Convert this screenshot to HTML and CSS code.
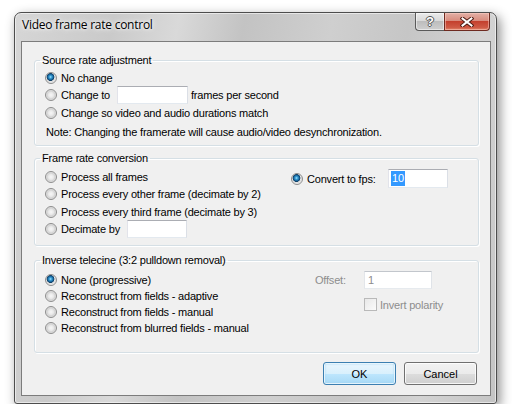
FILE: index.html
```html
<!DOCTYPE html>
<html lang="en">
<head>
    <meta charset="UTF-8">
    <title>Video frame rate control</title>
    <link rel="stylesheet" href="styles.css">
</head>
<body>
<div class="window">
    <div class="titlebar">
        <span class="title">Video frame rate control</span>
        <div class="caption-buttons">
            <button class="cap help">?</button>
            <button class="cap close">
                <svg width="14" height="10" viewBox="0 0 14 10">
                    <path d="M2.5 1.5 L11.5 8.5 M11.5 1.5 L2.5 8.5" stroke="#4b1a12" stroke-width="4" stroke-linecap="square" fill="none"/>
                    <path d="M2.5 1.5 L11.5 8.5 M11.5 1.5 L2.5 8.5" stroke="#fff" stroke-width="2" stroke-linecap="square" fill="none"/>
                </svg>
            </button>
        </div>
    </div>

    <div class="client">
        <fieldset class="group group-source">
            <legend>Source rate adjustment</legend>
            <label class="row"><input type="radio" class="radio" name="src" checked>No change</label>
            <div class="row">
                <label class="opt w-change"><input type="radio" class="radio" name="src">Change to</label>
                <span class="field w-rate"></span>
                <span class="after">frames per second</span>
            </div>
            <label class="row"><input type="radio" class="radio" name="src">Change so video and audio durations match</label>
            <p class="note">Note: Changing the framerate will cause audio/video desynchronization.</p>
        </fieldset>

        <fieldset class="group group-convert">
            <legend>Frame rate conversion</legend>
            <div class="cols">
                <div class="col-left w-left2">
                    <label class="row"><input type="radio" class="radio" name="conv">Process all frames</label>
                    <label class="row"><input type="radio" class="radio" name="conv">Process every other frame (decimate by 2)</label>
                    <label class="row"><input type="radio" class="radio" name="conv">Process every third frame (decimate by 3)</label>
                    <div class="row">
                        <label class="opt w-decimate"><input type="radio" class="radio" name="conv">Decimate by</label>
                        <span class="field w-dec"></span>
                    </div>
                </div>
                <div class="col-right fps">
                    <label class="opt w-fps"><input type="radio" class="radio" name="conv" checked>Convert to fps:</label>
                    <span class="field w-fpsfield"><span class="sel">10</span></span>
                </div>
            </div>
        </fieldset>

        <fieldset class="group group-ivtc">
            <legend>Inverse telecine (3:2 pulldown removal)</legend>
            <div class="cols">
                <div class="col-left w-left3">
                    <label class="row short"><input type="radio" class="radio" name="ivtc" checked>None (progressive)</label>
                    <label class="row short"><input type="radio" class="radio" name="ivtc">Reconstruct from fields - adaptive</label>
                    <label class="row short"><input type="radio" class="radio" name="ivtc">Reconstruct from fields - manual</label>
                    <label class="row short"><input type="radio" class="radio" name="ivtc">Reconstruct from blurred fields - manual</label>
                </div>
                <div class="col-right offset">
                    <div class="offset-row">
                        <span class="disabled w-offset">Offset:</span>
                        <span class="field disabled-field w-off">1</span>
                    </div>
                    <label class="check-row disabled"><span class="checkbox"></span>Invert polarity</label>
                </div>
            </div>
        </fieldset>

        <div class="buttons">
            <button class="btn default">OK</button>
            <button class="btn">Cancel</button>
        </div>
    </div>
</div>
</body>
</html>
```

FILE: styles.css
```css
body {
    margin: 0;
    background: #fff;
    font-family: "Liberation Sans", Arial, sans-serif;
    font-size: 11px;
    letter-spacing: -0.2px;
    color: #000;
}
.window {
    box-sizing: border-box;
    width: 483px;
    height: 392px;
    margin: 12px 0 0 14px;
    padding: 0 5px 7px 6px;
    border: 1px solid #4d4d4d;
    border-radius: 7px 7px 3px 3px;
    background: linear-gradient(100deg, #d6d6d6 0%, #cacaca 18%, #d9d9d9 30%, #c3c3c3 42%, #cfcfcf 58%, #c6c6c6 72%, #d3d3d3 86%, #c4c4c4 100%);
    box-shadow: inset 0 0 0 1px rgba(255, 255, 255, 0.55), 3px 4px 12px rgba(0, 0, 0, 0.45);
    display: flex;
    flex-direction: column;
}
.titlebar {
    height: 28px;
    display: flex;
    justify-content: space-between;
    align-items: flex-start;
    padding: 0 1px;
}
.title {
    font-family: "Open Sans", "Noto Sans", sans-serif;
    font-size: 12px;
    line-height: 16px;
    margin-top: 4px;
    letter-spacing: -0.25px;
    text-shadow: 0 0 6px #fff, 0 0 3px #fff;
}
.caption-buttons {
    display: flex;
}
.cap {
    height: 18px;
    margin: 0;
    padding: 0;
    border: 1px solid #5a5a5a;
    border-top: none;
    display: flex;
    align-items: center;
    justify-content: center;
}
.help {
    width: 29px;
    border-right: none;
    border-radius: 0 0 0 4px;
    background: linear-gradient(#ebebeb, #d9d9d9 45%, #bdbdbd 50%, #cfcfcf);
    color: #fff;
    font: bold 13px "Liberation Sans", Arial, sans-serif;
    text-shadow: -1px 0 #555, 1px 0 #555, 0 -1px #555, 0 1px #555;
    box-shadow: inset 0 0 0 1px rgba(255, 255, 255, 0.5);
}
.close {
    width: 46px;
    border-radius: 0 0 4px 0;
    border-color: #6e2a20;
    background: linear-gradient(#e3b0a6, #d88c7e 45%, #c4402e 50%, #cf5a45 85%, #e18a6e);
    box-shadow: inset 0 0 0 1px rgba(255, 210, 200, 0.5);
}
.client {
    flex: 1;
    background: #f0f0f0;
    border: 1px solid #7c7c7c;
    padding: 12px 0 10px;
    display: flex;
    flex-direction: column;
}
.group {
    margin: 0 11px 0 12px;
    padding: 3px 0 4px 10px;
    border: 1px solid #d5dfe5;
    border-radius: 3px;
    box-shadow: inset 1px 1px 0 #fff, 1px 1px 0 #fff;
    min-inline-size: 0;
}
.group legend {
    padding: 0 2px;
    margin-left: -5px;
    line-height: 13px;
}
.group-source {
    padding-top: 2px;
    padding-bottom: 3.5px;
}
.group-convert {
    margin-top: 6.5px;
    padding-top: 3px;
    padding-bottom: 7px;
}
.group-ivtc {
    margin-top: 8px;
    padding-top: 5px;
    padding-bottom: 16px;
}
.row {
    display: flex;
    align-items: center;
    height: 17.5px;
    white-space: nowrap;
}
.row.short {
    height: 16px;
}
.opt {
    display: flex;
    align-items: center;
}
.w-change { width: 72px; }
.w-decimate { width: 82px; }
.w-fps { width: 97px; }
.w-left2 { width: 246px; }
.w-left3 { width: 270px; }
.w-offset { width: 49px; }
.radio {
    appearance: none;
    -webkit-appearance: none;
    box-sizing: border-box;
    width: 12px;
    height: 12px;
    margin: 0 4px 0 0;
    border: 1px solid #8d8d8d;
    border-radius: 50%;
    background: radial-gradient(circle at 50% 50%, #f7f7f7 0, #e9e9e9 2.5px, #d2d2d2 4px, #e4e4e4 5px, #f3f3f3 6px);
    flex: none;
}
.radio:checked {
    background: radial-gradient(circle at 45% 40%, #aee6ff 0, #3fa6dc 1.2px, #1a6aa2 2.6px, #0b3b61 3.6px, #eaeaea 4.2px, #dadada 5px, #f0f0f0 6px);
}
.field {
    box-sizing: border-box;
    display: inline-flex;
    align-items: center;
    height: 18px;
    padding: 0 3px;
    background: #fff;
    border: 1px solid;
    border-color: #abadb3 #dbdfe6 #e3e9ef #e2e3ea;
    flex: none;
}
.w-rate { width: 71px; }
.w-dec { width: 60px; }
.w-fpsfield {
    width: 60px;
    height: 19px;
    padding-left: 2px;
}
.w-off { width: 68px; }
.sel {
    background: #3399ff;
    color: #fff;
    line-height: 15px;
    padding: 0 1px;
}
.after {
    margin-left: 3px;
}
.note {
    margin: 2px 0 0 1px;
    line-height: 17.5px;
    white-space: nowrap;
}
.cols {
    display: flex;
    align-items: flex-start;
}
.fps {
    display: flex;
    align-items: center;
    margin-top: 1px;
}
.offset {
    margin-top: -1px;
}
.offset-row {
    display: flex;
    align-items: center;
}
.disabled {
    color: #8d8d8d;
}
.disabled-field {
    color: #8d8d8d;
    border-color: #c2c6cc #dfe3e8 #e6eaee #e3e6ea;
}
.check-row {
    display: flex;
    align-items: center;
    margin: 9px 0 0 49px;
    height: 13px;
}
.checkbox {
    box-sizing: border-box;
    width: 13px;
    height: 13px;
    margin-right: 3px;
    border: 1px solid #b9b9b9;
    background: linear-gradient(135deg, #e8e8e8, #fbfbfb);
}
.buttons {
    display: flex;
    justify-content: flex-end;
    gap: 8px;
    margin-top: 9px;
    padding-right: 13px;
}
.btn {
    box-sizing: border-box;
    width: 73px;
    height: 23px;
    margin: 0;
    font-family: "Liberation Sans", Arial, sans-serif;
    font-size: 11px;
    color: #000;
    border: 1px solid #707070;
    border-radius: 3px;
    background: linear-gradient(#f2f2f2, #ebebeb 50%, #dddddd 51%, #cfcfcf);
    box-shadow: inset 0 0 0 1px rgba(255, 255, 255, 0.8);
}
.btn.default {
    border-color: #3c7fb1;
    background: linear-gradient(#eaf6fd, #d9f0fc 50%, #bee6fd 51%, #a7d9f5);
    box-shadow: inset 0 0 0 1px rgba(255, 255, 255, 0.7), inset 0 0 2px 1px #9fd5f2;
}
```
